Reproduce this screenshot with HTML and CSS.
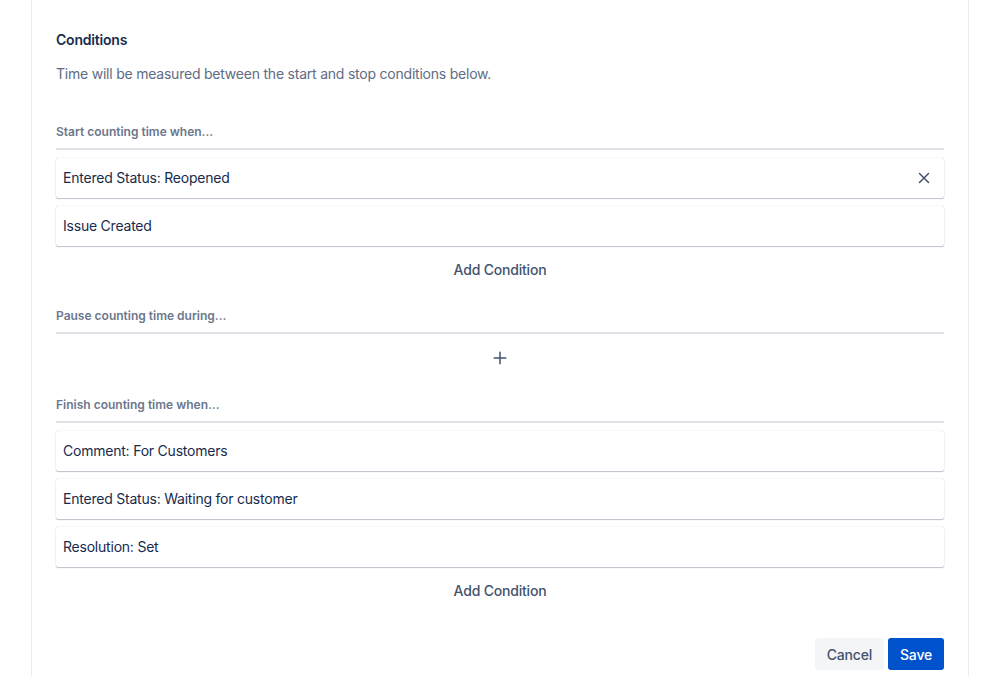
FILE: index.html
```html
<!DOCTYPE html>
<html lang="en">
<head>
<meta charset="utf-8">
<title>Conditions</title>
<link rel="stylesheet" href="styles.css">
</head>
<body>
<div class="panel">
  <h2 class="title">Conditions</h2>
  <p class="desc">Time will be measured between the start and stop conditions below.</p>

  <section class="group group-start">
    <div class="group-label">Start counting time when...</div>
    <div class="rows">
      <div class="row">
        <span class="row-text">Entered Status: Reopened</span>
        <button class="remove" aria-label="Remove">
          <svg width="12" height="12" viewBox="0 0 12 12"><path d="M1.5 1.5 L10.5 10.5 M10.5 1.5 L1.5 10.5" stroke="#42526e" stroke-width="1.5" stroke-linecap="round" fill="none"/></svg>
        </button>
      </div>
      <div class="row"><span class="row-text">Issue Created</span></div>
    </div>
    <div class="add"><button class="add-btn">Add Condition</button></div>
  </section>

  <section class="group">
    <div class="group-label">Pause counting time during...</div>
    <div class="add add-plus">
      <button class="plus-btn" aria-label="Add">
        <svg width="14" height="14" viewBox="0 0 14 14"><path d="M7 1.2 V12.8 M1.2 7 H12.8" stroke="#42526e" stroke-width="1.5" stroke-linecap="round" fill="none"/></svg>
      </button>
    </div>
  </section>

  <section class="group">
    <div class="group-label">Finish counting time when...</div>
    <div class="rows">
      <div class="row"><span class="row-text">Comment: For Customers</span></div>
      <div class="row"><span class="row-text">Entered Status: Waiting for customer</span></div>
      <div class="row"><span class="row-text">Resolution: Set</span></div>
    </div>
    <div class="add"><button class="add-btn">Add Condition</button></div>
  </section>

  <div class="footer">
    <button class="btn btn-cancel">Cancel</button>
    <button class="btn btn-save">Save</button>
  </div>
</div>
</body>
</html>
```

FILE: styles.css
```css
html, body {
  margin: 0;
  padding: 0;
  background: #ffffff;
  overflow: hidden;
}

body {
  font-family: Inter, "Noto Sans", "Liberation Sans", sans-serif;
  color: #172b4d;
  font-size: 14px;
}

.panel {
  box-sizing: border-box;
  margin-left: 31px;
  width: 938px;
  height: 676px;
  border-left: 1px solid #ebecf0;
  border-right: 1px solid #ebecf0;
  padding: 30px 24px 0 24px;
  background: #ffffff;
}

.title {
  margin: 0;
  font-size: 14px;
  line-height: 20px;
  font-weight: 600;
  letter-spacing: -0.2px;
  color: #172b4d;
}

.desc {
  margin: 14px 0 0 0;
  font-size: 14px;
  line-height: 20px;
  letter-spacing: -0.22px;
  color: #5e6c84;
}

.group {
  margin-top: 23px;
}

.group-start {
  margin-top: 40px;
}

.group-label {
  font-size: 12px;
  line-height: 16px;
  font-weight: 600;
  color: #6b778c;
  padding-bottom: 8px;
  border-bottom: 2px solid #dfe1e6;
}

.rows {
  display: flex;
  flex-direction: column;
  gap: 8px;
  margin-top: 8px;
}

.row {
  height: 40px;
  display: flex;
  align-items: center;
  justify-content: space-between;
  padding: 0 8px 0 7px;
  background: #ffffff;
  border-radius: 2px;
  box-shadow: 0 1px 1px rgba(9, 30, 66, 0.25), 0 0 1px 0 rgba(9, 30, 66, 0.31);
}

.row-text {
  font-size: 14px;
  line-height: 20px;
  letter-spacing: -0.22px;
  color: #172b4d;
}

.remove {
  width: 24px;
  height: 24px;
  border: none;
  background: transparent;
  padding: 0;
  display: flex;
  align-items: center;
  justify-content: center;
  cursor: pointer;
}

.add {
  display: flex;
  justify-content: center;
  margin-top: 7px;
}

.add-plus {
  margin-top: 8px;
}

.add-btn,
.plus-btn {
  height: 32px;
  border: none;
  background: transparent;
  font-family: inherit;
  font-size: 14px;
  font-weight: 500;
  letter-spacing: -0.2px;
  color: #42526e;
  padding: 0 12px;
  border-radius: 3px;
  cursor: pointer;
  display: flex;
  align-items: center;
}

.plus-btn {
  width: 32px;
  padding: 0;
  justify-content: center;
}

.footer {
  display: flex;
  justify-content: flex-end;
  gap: 4px;
  margin-top: 32px;
}

.btn {
  height: 32px;
  border: none;
  border-radius: 3px;
  padding: 0 12px;
  font-family: inherit;
  font-size: 14px;
  font-weight: 500;
  letter-spacing: -0.2px;
  cursor: pointer;
}

.btn-cancel {
  background: #f4f5f7;
  color: #42526e;
}

.btn-save {
  background: #0052cc;
  color: #ffffff;
}
```
